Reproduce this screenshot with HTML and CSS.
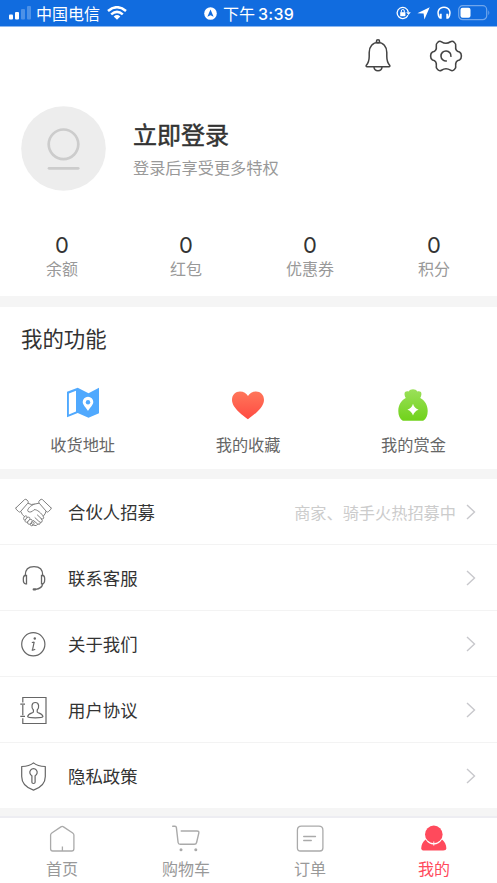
FILE: index.html
```html
<!DOCTYPE html>
<html lang="zh-CN">
<head>
<meta charset="utf-8">
<title>我的</title>
<link rel="stylesheet" href="styles.css">
</head>
<body>
<div class="app">
  <header class="status">
    <div class="status-left">
      <svg width="24" height="14" viewBox="0 0 24 14" fill="#fff"><rect x="1" y="8.5" width="4" height="5" rx="1"/><rect x="7" y="6" width="4" height="7.5" rx="1"/><g opacity=".25"><rect x="13" y="3" width="4" height="10.5" rx="1"/><rect x="19" y="0" width="4" height="13.5" rx="1"/></g></svg>
      <span class="carrier">中国电信</span>
      <svg width="20" height="14" viewBox="0 0 20 14" fill="none" stroke="#fff" stroke-width="2.5"><path d="M1 5Q10-2.6 19 5M4.2 8.4Q10 3.4 15.8 8.4"/><path d="M6.7 10.4Q10 7.8 13.3 10.4L10 13.8Z" fill="#fff" stroke="none"/></svg>
    </div>
    <div class="status-time">
      <svg width="13" height="13" viewBox="0 0 13 13"><circle cx="6.5" cy="6.5" r="6.3" fill="#fff"/><path d="M6.5 2.5L9.6 9.8 6.5 8.3 3.4 9.8Z" fill="#116cdf"/></svg>
      <span class="meridiem">下午</span><span class="clock">3:39</span>
    </div>
    <div class="status-right">
      <svg width="15" height="14" viewBox="0 0 15 14" fill="none" stroke="#fff" stroke-width="1.3"><path d="M11.9 9.2A5.6 5.6 0 1 1 12.3 6.2"/><path d="M10.2 6.2H14.8L12.5 9Z" fill="#fff" stroke="none"/><rect x="4.2" y="6.2" width="5.2" height="4" fill="#fff" stroke="none"/><path d="M5.3 6.5V5a1.5 1.5 0 0 1 3 0V6.5" stroke-width="1"/></svg>
      <svg class="loc" width="13" height="13" viewBox="0 0 13 13" fill="#fff"><path d="M12.7.3L7.4 12.6 6.6 6.6.4 6.2Z"/></svg>
      <svg class="phones" width="14" height="14" viewBox="0 0 14 14" fill="none" stroke="#fff" stroke-width="1.5"><path d="M2.8 12.2C-1 6 2 1.2 7 1.2S15 6 11.2 12.2"/><path d="M3.7 7.7V12.7M10.3 7.7V12.7" stroke-width="2"/></svg>
      <svg class="battery" width="32" height="16" viewBox="0 0 32 16"><rect x=".7" y=".7" width="28" height="14" rx="4" fill="none" stroke="#fff" stroke-opacity=".4" stroke-width="1.2"/><rect x="2.5" y="2.7" width="10" height="10" rx="2" fill="#fff"/><path d="M30.3 5.3q2 2.5 0 5Z" fill="#fff" opacity=".4"/></svg>
    </div>
  </header>

  <section class="profile">
    <div class="tools">
      <svg width="28" height="34" viewBox="0 0 28 34" fill="none" stroke="#444" stroke-width="1.5" stroke-linejoin="round"><path d="M2.2 26.6C4.8 23.5 5.2 21.7 5.2 17.5V13.5C5.2 7.5 8.8 3.5 14 3.5S22.8 7.5 22.8 13.5V17.5C22.8 21.7 23.2 23.5 25.8 26.6Q26.2 27.7 25 27.7H3Q1.8 27.7 2.2 26.6Z"/><circle cx="14" cy="2.4" r="1.6"/><path d="M10 28c.3 5 7.7 5 8 0"/></svg>
      <svg width="34" height="34" viewBox="0 0 34 34" fill="none" stroke="#444" stroke-width="1.6" stroke-linejoin="round"><path d="M8.6 3.5Q10.5 1.5 12.5 2.8C15.5 4.7 18.5 4.7 21.5 2.8Q23.5 1.5 25.4 3.5Q27.2 5 26.7 7.3C26.3 10.2 27.8 12.4 30.5 13Q32.4 14 32.4 17T30.5 21C27.8 21.6 26.3 23.8 26.7 26.7Q27.2 29 25.4 30.5Q23.5 32.5 21.5 31.2C18.5 29.3 15.5 29.3 12.5 31.2Q10.5 32.5 8.6 30.5Q6.8 29 7.3 26.7C7.7 23.8 6.2 21.6 3.5 21Q1.6 20 1.6 17T3.5 13C6.2 12.4 7.7 10.2 7.3 7.3Q6.8 5 8.6 3.5Z"/><path d="M17.8 21.9A5 5 0 1 1 21.9 17.8"/></svg>
    </div>
    <div class="user">
      <svg width="85" height="85" viewBox="0 0 85 85"><circle cx="42.5" cy="42.5" r="42.3" fill="#ededed"/><g fill="none" stroke="#ccc" stroke-width="2.7" stroke-linecap="round"><circle cx="42.5" cy="38.3" r="14.8"/><path d="M28 62.3H57.2"/></g></svg>
      <div class="user-text"><h1>立即登录</h1><p>登录后享受更多特权</p></div>
    </div>
    <div class="stats">
      <div class="stat"><b>0</b><span>余额</span></div>
      <div class="stat"><b>0</b><span>红包</span></div>
      <div class="stat"><b>0</b><span>优惠券</span></div>
      <div class="stat"><b>0</b><span>积分</span></div>
    </div>
  </section>

  <section class="features">
    <h2>我的功能</h2>
    <div class="feature-grid">
      <div class="feature">
        <svg width="34" height="34" viewBox="0 0 34 34"><path fill="#50a9fe" d="M1 4.8L11.7.8 22.5 6.3 33 .8V26.2L22.5 30.8 11.7 26 1 30.3Z"/><path fill="#fff" d="M2.9 6.5L10 3.8V24.6L2.9 27.5Z"/><path fill="#fff" d="M22 24C20.8 21.5 16.7 18 16.7 15A5.3 5.3 0 0 1 27.3 15C27.3 18 23.2 21.5 22 24Z"/><circle cx="22" cy="15.2" r="2.2" fill="#50a9fe"/></svg>
        <span>收货地址</span>
      </div>
      <div class="feature">
        <svg width="34" height="34" viewBox="0 0 34 34"><defs><linearGradient id="red" x2="0" y2="1"><stop stop-color="#ff765a"/><stop offset="1" stop-color="#ff4b42"/></linearGradient></defs><path fill="url(#red)" d="M17 32.3C13.5 29.3 1 21.3 1 12.9C1 7.8 4.6 4.6 9 4.6C12.6 4.6 15.5 6.6 17 9C18.5 6.6 21.4 4.6 25 4.6C29.4 4.6 33 7.8 33 12.9C33 21.3 20.5 29.3 17 32.3Z"/></svg>
        <span>我的收藏</span>
      </div>
      <div class="feature">
        <svg width="34" height="34" viewBox="0 0 34 34"><defs><linearGradient id="green" x2="0" y2="1"><stop stop-color="#9be05a"/><stop offset="1" stop-color="#70d21a"/></linearGradient></defs><path fill="url(#green)" d="M9.8 11.1C7.2 6.2 8.8 3.2 12.6 4.4C14.4 1.6 19.6 1.6 21.4 4.4C25.2 3.2 26.8 6.2 24.2 11.1C29 13.5 31.7 18.5 31.7 24C31.7 28.5 30 32 27.2 33.8H6.8C4 32 2.3 28.5 2.3 24C2.3 18.5 5 13.5 9.8 11.1Z"/><path fill="#fff" d="M17 16.8Q18.3 21.4 22.6 22.7Q18.3 24 17 28.6Q15.7 24 11.4 22.7Q15.7 21.4 17 16.8Z"/></svg>
        <span>我的赏金</span>
      </div>
    </div>
  </section>

  <nav class="menu">
    <a class="row">
      <svg class="row-icon" width="38" height="30" viewBox="0 0 38 30" fill="none" stroke="#808080" stroke-width="1" stroke-linejoin="round" stroke-linecap="round"><path d="M1 10.8L9.7 2.5Q10.8 1.8 12 3L13.1 4.4Q13.6 5.3 12.8 6.2L5.3 14.8Q4.5 15.5 3.6 14.6L1.2 12.3Q.5 11.5 1 10.8ZM36 10.8L27.3 2.5Q26.2 1.8 25 3L23.9 4.4Q23.4 5.3 24.2 6.2L31.7 14.8Q32.5 15.5 33.4 14.6L35.8 12.3Q36.5 11.5 36 10.8Z"/><path d="M13.2 6.4Q16.5 8.3 19.4 7.1L24 6.2M19.3 7.2C15.5 8.5 13 11.5 12.7 13.2C12.5 15.8 17 15.7 19 12.7C22 12 26.7 16.7 28.3 19.3C29.5 21.7 27.7 22.7 26.2 21.5L22.4 18M31 14.5Q30.5 17 28.4 19.1M5.9 14.8Q7 18 9.3 19.6"/><path d="M26.2 21.7Q28.3 23.7 26.7 25.2Q25.2 26 23.7 24.2L20 20.7M25.5 25.8Q25 28.4 22.6 27L18.5 23.5M22.8 27.2Q21.7 29.7 18.6 28.2L16.4 26.4"/><path d="M9.4 19.6C10 18 12.9 18.8 11.8 20.8L10.3 22.8C8.8 23.6 7.6 21.4 9.4 19.6M12 20.8C14 19.2 15.7 20.6 14.5 22.5L12.5 25C10.9 26 9 24.2 10.4 22.7M14.6 22.6C16.5 21.7 18 23 16.9 24.8L15.4 26.9C14 28 11.7 26.7 12.6 25M17 24.8C19 24.5 19.6 26 18.7 27.4C17.5 29.6 14.5 29 15.4 27"/></svg>
      <span class="row-label">合伙人招募</span><span class="hint">商家、骑手火热招募中</span>
      <svg class="arrow" width="10" height="16" viewBox="0 0 10 16"><path d="M1 1L8.5 8 1 15"/></svg>
    </a>
    <a class="row">
      <svg class="row-icon" width="38" height="30" viewBox="0 0 38 30" fill="none" stroke="#666" stroke-width="1.3" stroke-linecap="round"><path d="M10.2 12.5C10.2 6.3 14 3.7 19 3.7S27.8 6.3 27.8 12.5"/><path d="M11.5 12.5H10.4C8.5 12.5 8.3 13.8 8.3 16.3S8.6 20.8 10.5 20.8H11.5ZM26.5 12.5H27.6C29.5 12.5 29.7 13.8 29.7 16.3S29.4 20.8 27.5 20.8H26.5Z"/><path d="M27.7 21Q26.7 25.7 20.5 26.3"/><path d="M18.7 26.4H20.2" stroke-width="2.2"/></svg>
      <span class="row-label">联系客服</span>
      <svg class="arrow" width="10" height="16" viewBox="0 0 10 16"><path d="M1 1L8.5 8 1 15"/></svg>
    </a>
    <a class="row">
      <svg class="row-icon" width="38" height="30" viewBox="0 0 38 30" fill="none" stroke="#666" stroke-width="1.2"><circle cx="18.3" cy="15.3" r="11.6"/><circle cx="19.8" cy="9.5" r="1.2" fill="#666" stroke="none"/><path d="M16.8 13.5Q18.7 13.5 19.2 12.8L17.7 20Q17.6 21.8 20.2 20.3M16.7 21.2H18.2"/></svg>
      <span class="row-label">关于我们</span>
      <svg class="arrow" width="10" height="16" viewBox="0 0 10 16"><path d="M1 1L8.5 8 1 15"/></svg>
    </a>
    <a class="row">
      <svg class="row-icon" width="38" height="30" viewBox="0 0 38 30" fill="none" stroke="#666" stroke-width="1.2"><path d="M7.8 7.5V2.5H31V28.5H7.8V23.2M7.8 10V20.3M5.3 9.1H10M5.3 21.3H10"/><path d="M20.3 7.5C16.4 7.5 16.1 12.5 18.4 15V17C17.5 18.5 13.2 17.9 12.7 21.7C13 23.2 27.6 23.2 27.9 21.7C27.4 17.9 23.1 18.5 22.2 17V15C24.5 12.5 24.2 7.5 20.3 7.5Z"/></svg>
      <span class="row-label">用户协议</span>
      <svg class="arrow" width="10" height="16" viewBox="0 0 10 16"><path d="M1 1L8.5 8 1 15"/></svg>
    </a>
    <a class="row">
      <svg class="row-icon" width="38" height="30" viewBox="0 0 38 30" fill="none" stroke="#666" stroke-width="1.2" stroke-linejoin="round"><path d="M18.5 1.9Q22.5 5.3 30.3 5.5V15.5C30.3 22.5 25.5 26.8 18.5 29.1C11.5 26.8 6.7 22.5 6.7 15.5V5.5Q14.5 5.3 18.5 1.9Z"/><path d="M16.9 14.7A3.7 3.7 0 1 1 20.1 14.7V21.3Q20.1 22.5 18.5 22.5T16.9 21.3Z"/></svg>
      <span class="row-label">隐私政策</span>
      <svg class="arrow" width="10" height="16" viewBox="0 0 10 16"><path d="M1 1L8.5 8 1 15"/></svg>
    </a>
  </nav>

  <nav class="tabs">
    <a class="tab"><svg width="28" height="28" viewBox="0 0 28 28" fill="none" stroke="#aaa" stroke-width="1.3"><path d="M12.9 1.9Q14.2 1 15.5 1.9L24.7 8Q25.9 8.8 25.9 10V23.8Q25.9 26 23.7 26H4.8Q2.6 26 2.6 23.8V10Q2.6 8.8 3.8 8ZM14.4 21.5V26"/></svg><span>首页</span></a>
    <a class="tab"><svg width="28" height="28" viewBox="0 0 28 28" fill="none" stroke="#aaa" stroke-width="1.4" stroke-linecap="round"><path d="M.7 1.3H3Q4.3 1.3 4.4 2.7L6.1 17.5Q6.3 19.3 8.2 19.3H22.3Q24.2 19.3 24.6 17.5L26.8 8.2Q27.3 6 25 6H9.2"/><circle cx="9" cy="24.8" r="1.5" fill="#aaa" stroke="none"/><circle cx="23.8" cy="24.8" r="1.5" fill="#aaa" stroke="none"/></svg><span>购物车</span></a>
    <a class="tab"><svg width="28" height="28" viewBox="0 0 28 28" fill="none" stroke="#aaa" stroke-width="1.3" stroke-linecap="round"><path d="M5.4 1.2H22.9Q26.9 1.2 26.9 5.2V23Q26.9 26 23.9 26H4.4Q1.4 26 1.4 23V5.2Q1.4 1.2 5.4 1.2ZM7.7 11.5H19.5M7.7 15.5H15.3"/></svg><span>订单</span></a>
    <a class="tab active"><svg width="28" height="28" viewBox="0 0 28 28" fill="#ff4a5c"><path d="M5.6 14.6C3 16.6 1.3 19.8 1.2 23.5Q1.3 25.4 4.3 25.6H23.3Q26.3 25.4 26.4 23.5C26.3 19.8 24.6 16.6 22 14.6Q19 19.6 13.8 19.6T5.6 14.6Z"/><circle cx="13.8" cy="9.4" r="8.8"/><path d="M13.8 16.5V20.6" fill="none" stroke="#fff" stroke-width=".9"/></svg><span>我的</span></a>
  </nav>
</div>
</body>
</html>
```

FILE: styles.css
```css
* { box-sizing: border-box; }
body {
  margin: 0;
  background: #fff;
  color: #333;
  font-family: "Noto Sans CJK SC", sans-serif;
}
svg { display: block; flex: none; }
h1, h2, p { margin: 0; font-weight: 400; }
.app {
  width: 497px;
  height: 883px;
  display: flex;
  flex-direction: column;
  overflow: hidden;
  background: #f5f5f5;
}
.status {
  height: 27px;
  flex: none;
  display: grid;
  grid-template-columns: 204px 1fr 107px;
  align-items: center;
  background: #116cdf;
  border-bottom: 1px solid #8bb7f0;
  color: #fff;
  font-size: 16px;
  line-height: 26px;
}
.status > div { display: flex; align-items: center; height: 26px; }
.status-left { padding-left: 8px; }
.carrier { margin: 0 7px 0 4px; }
.carrier, .meridiem { padding-bottom: 1px; line-height: 24px; }
.status-time { gap: 6px; }
.clock {
  margin-left: -3px;
  padding-top: 1px;
  font-family: Inter, sans-serif;
  font-size: 16px;
  font-weight: 500;
  letter-spacing: .3px;
}
.status-right { padding-left: 6px; }
.loc { margin-left: 6px; }
.phones { margin-left: 7px; }
.battery { margin-left: 7px; }
.profile { height: 269px; flex: none; background: #fff; }
.tools {
  display: flex;
  justify-content: flex-end;
  gap: 37px;
  padding: 12px 34px 0 0;
}
.user { display: flex; gap: 27px; padding: 33px 0 0 21px; }
.user-text { padding-top: 11px; }
h1 { font-size: 24px; line-height: 34px; -webkit-text-stroke: .5px #333; }
.user-text p { margin-top: 4px; color: #999; font-size: 16.2px; line-height: 24px; }
.stats { display: grid; grid-template-columns: repeat(4, 124px); padding-top: 42px; }
.stat { display: flex; flex-direction: column; align-items: center; }
.stat b { font-family: Inter, sans-serif; font-size: 22px; font-weight: 400; line-height: 25px; }
.stat span { margin-top: -1px; color: #999; font-size: 16px; line-height: 22px; }
.features { height: 162px; flex: none; margin-top: 11px; background: #fff; }
h2 { padding: 15px 0 0 21px; font-size: 21.4px; line-height: 32px; }
.feature-grid { display: grid; grid-template-columns: repeat(3, 165.4px); padding-top: 33px; }
.feature { display: flex; flex-direction: column; align-items: center; }
.feature span { margin-top: 11px; color: #666; font-size: 16.2px; line-height: 24px; }
.menu { margin-top: 10px; background: #fff; }
.row {
  display: flex;
  align-items: center;
  height: 66px;
  padding: 0 21px 0 15px;
  border-bottom: 1px solid #f3f3f3;
}
.row:last-child { border-bottom: 0; height: 65px; }
.row-icon { margin-right: 15px; }
.row-label { font-size: 17.4px; line-height: 26px; }
.hint { margin-left: auto; color: #ccc; font-size: 16.2px; line-height: 24px; }
.arrow { margin-left: auto; fill: none; stroke: #c8c8cc; stroke-width: 1.4; }
.hint + .arrow { margin-left: 10px; }
.tabs {
  display: grid;
  grid-template-columns: repeat(4, 124px);
  height: 67px;
  flex: none;
  margin-top: auto;
  background: #fff;
  border-top: 2px solid #ededf2;
}
.tab {
  display: flex;
  flex-direction: column;
  align-items: center;
  padding-top: 7px;
  color: #999;
  font-size: 16px;
  line-height: 24px;
}
.tab span { margin-top: 3px; }
.tab.active { color: #ff4a5c; }
```
